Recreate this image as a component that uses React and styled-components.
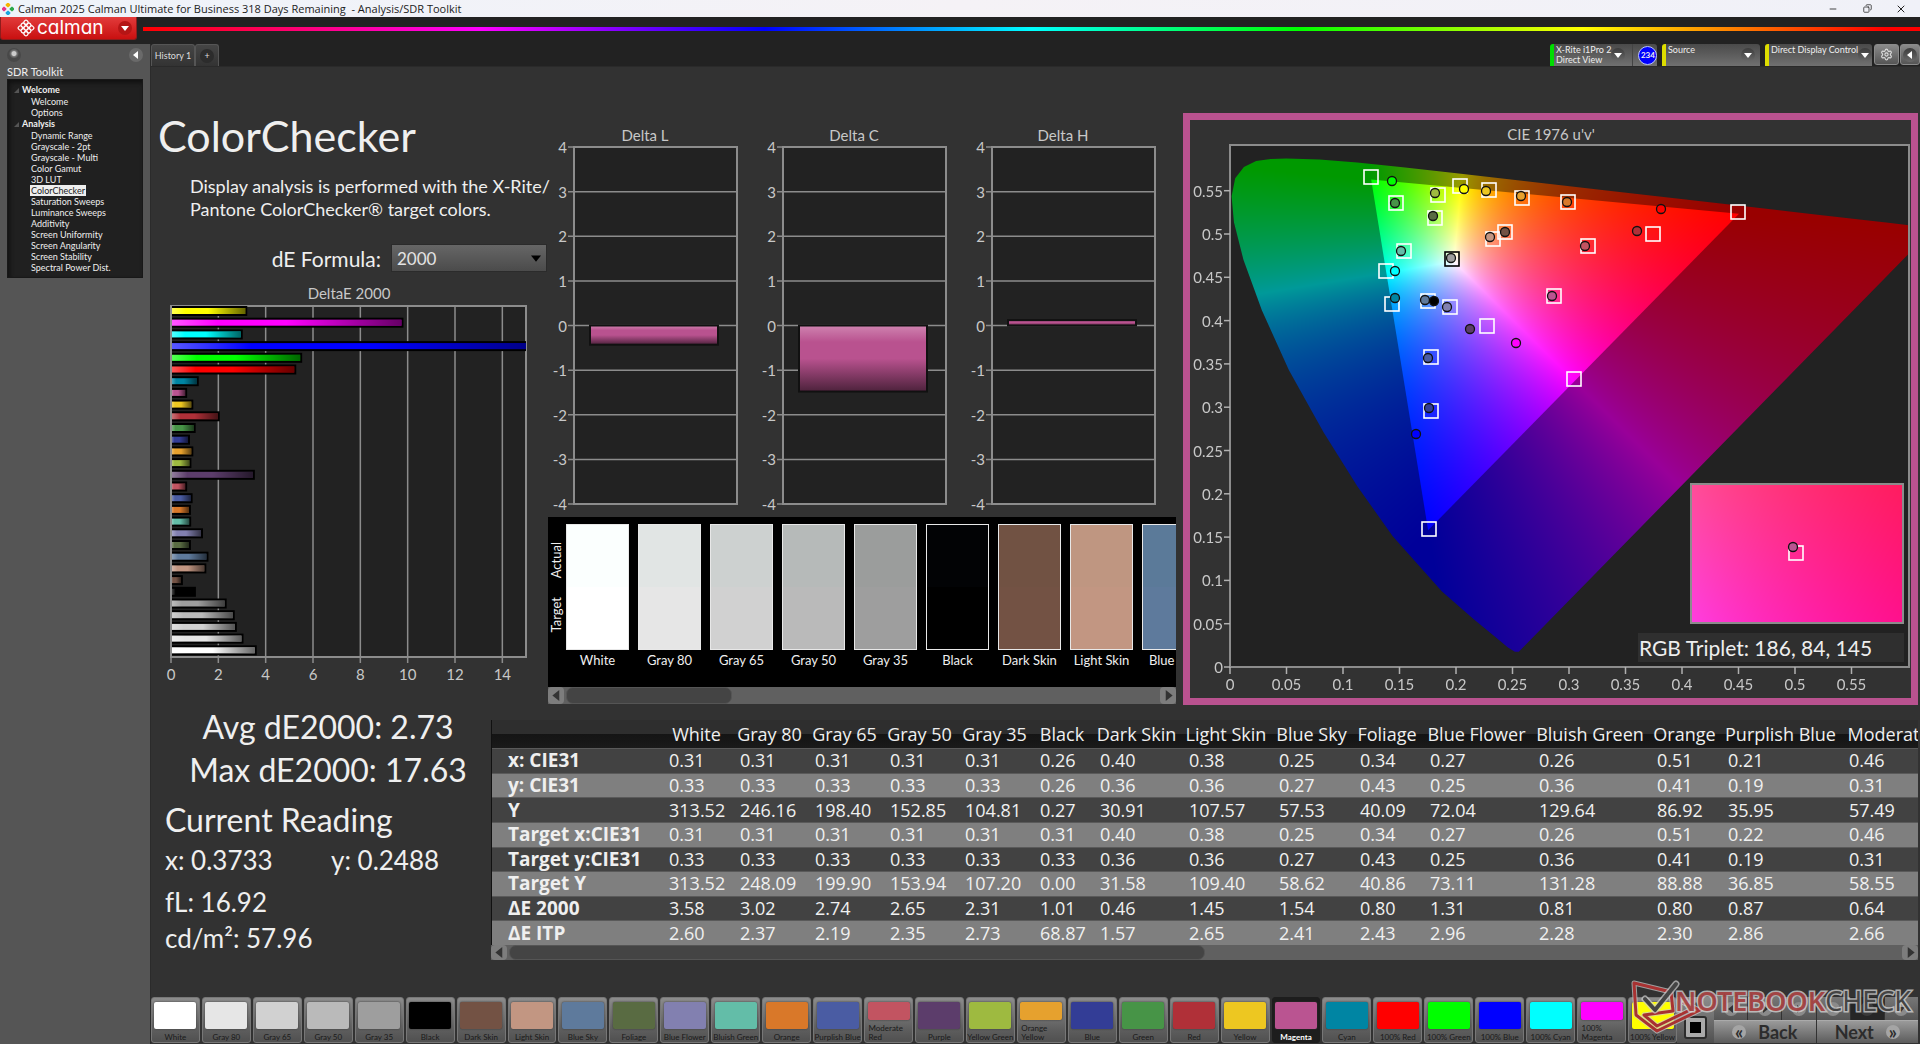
import React, { useEffect, useRef } from "react";
import styled, { createGlobalStyle, css } from "styled-components";
import { Minus, Copy, X, Settings } from "lucide-react";

const GlobalStyle = createGlobalStyle`
  * {
    box-sizing: border-box;
  }

  body {
    margin: 0;
    background: #323232;
    color: #efefef;
    font-family: Lato, "Noto Sans", sans-serif;
  }

  button, select {
    font-family: inherit;
    color: inherit;
    border: 0;
    padding: 0;
    margin: 0;
  }

  a {
    color: inherit;
    text-decoration: none;
  }
`;

/* ---------- data ---------- */

const patches = [
  { name: "White", color: "#ffffff", actual: "#fbfffe", de: 3.58 },
  { name: "Gray 80", color: "#e6e6e6", actual: "#e1e5e4", de: 3.02 },
  { name: "Gray 65", color: "#d1d1d1", actual: "#cdd1d0", de: 2.74 },
  { name: "Gray 50", color: "#bababa", actual: "#b6bab9", de: 2.65 },
  { name: "Gray 35", color: "#9e9e9e", actual: "#9b9d9c", de: 2.31 },
  { name: "Black", color: "#000000", actual: "#020305", de: 1.01 },
  { name: "Dark Skin", color: "#735244", actual: "#715243", de: 0.46 },
  { name: "Light Skin", color: "#c29682", actual: "#bf9681", de: 1.45 },
  { name: "Blue Sky", color: "#5e7a9c", actual: "#5b7a99", de: 1.54 },
  { name: "Foliage", color: "#596b42", de: 0.8 },
  { name: "Blue Flower", color: "#8280b0", de: 1.31 },
  { name: "Bluish Green", color: "#63bda8", de: 0.81 },
  { name: "Orange", color: "#d97829", de: 0.8 },
  { name: "Purplish Blue", color: "#4a5ca3", de: 0.87 },
  { name: "Moderate Red", color: "#c25461", de: 0.64, tall: true },
  { name: "Purple", color: "#5c3d6b", de: 3.5 },
  { name: "Yellow Green", color: "#9eba40", de: 0.82 },
  { name: "Orange Yellow", color: "#e6a12e", de: 0.9, tall: true },
  { name: "Blue", color: "#333d96", de: 0.76 },
  { name: "Green", color: "#479447", de: 1.0 },
  { name: "Red", color: "#b03038", de: 2.02 },
  { name: "Yellow", color: "#edc721", de: 0.9 },
  { name: "Magenta", color: "#ba5491", de: 0.64 },
  { name: "Cyan", color: "#0085a3", de: 1.13 },
  { name: "100% Red", color: "#ff0000", de: 5.25 },
  { name: "100% Green", color: "#00ff00", de: 5.5 },
  { name: "100% Blue", color: "#0000ff", de: 17.63 },
  { name: "100% Cyan", color: "#00ffff", de: 2.99 },
  { name: "100% Magenta", color: "#ff00ff", de: 9.78, tall: true },
  { name: "100% Yellow", color: "#ffff00", de: 3.18 },
];

const columns = [
  { name: "White", width: 71, values: ["0.31", "0.33", "313.52", "0.31", "0.33", "313.52", "3.58", "2.60"] },
  { name: "Gray 80", width: 75, values: ["0.31", "0.33", "246.16", "0.31", "0.33", "248.09", "3.02", "2.37"] },
  { name: "Gray 65", width: 75, values: ["0.31", "0.33", "198.40", "0.31", "0.33", "199.90", "2.74", "2.19"] },
  { name: "Gray 50", width: 75, values: ["0.31", "0.33", "152.85", "0.31", "0.33", "153.94", "2.65", "2.35"] },
  { name: "Gray 35", width: 75, values: ["0.31", "0.33", "104.81", "0.31", "0.33", "107.20", "2.31", "2.73"] },
  { name: "Black", width: 60, values: ["0.26", "0.26", "0.27", "0.31", "0.33", "0.00", "1.01", "68.87"] },
  { name: "Dark Skin", width: 89, values: ["0.40", "0.36", "30.91", "0.40", "0.36", "31.58", "0.46", "1.57"] },
  { name: "Light Skin", width: 90, values: ["0.38", "0.36", "107.57", "0.38", "0.36", "109.40", "1.45", "2.65"] },
  { name: "Blue Sky", width: 81, values: ["0.25", "0.27", "57.53", "0.25", "0.27", "58.62", "1.54", "2.41"] },
  { name: "Foliage", width: 70, values: ["0.34", "0.43", "40.09", "0.34", "0.43", "40.86", "0.80", "2.43"] },
  { name: "Blue Flower", width: 109, values: ["0.27", "0.25", "72.04", "0.27", "0.25", "73.11", "1.31", "2.96"] },
  { name: "Bluish Green", width: 118, values: ["0.26", "0.36", "129.64", "0.26", "0.36", "131.28", "0.81", "2.28"] },
  { name: "Orange", width: 71, values: ["0.51", "0.41", "86.92", "0.51", "0.41", "88.88", "0.80", "2.30"] },
  { name: "Purplish Blue", width: 121, values: ["0.21", "0.19", "35.95", "0.22", "0.19", "36.85", "0.87", "2.86"] },
  { name: "Moderate Red", width: 132, values: ["0.46", "0.31", "57.49", "0.46", "0.31", "58.55", "0.64", "2.66"] },
];

const rowNames = [
  "x: CIE31",
  "y: CIE31",
  "Y",
  "Target x:CIE31",
  "Target y:CIE31",
  "Target Y",
  "ΔE 2000",
  "ΔE ITP",
];

const tree = [
  { title: "Welcome", items: ["Welcome", "Options"] },
  {
    title: "Analysis",
    items: [
      "Dynamic Range",
      "Grayscale - 2pt",
      "Grayscale - Multi",
      "Color Gamut",
      "3D LUT",
      "ColorChecker",
      "Saturation Sweeps",
      "Luminance Sweeps",
      "Additivity",
      "Screen Uniformity",
      "Screen Angularity",
      "Screen Stability",
      "Spectral Power Dist.",
    ],
  },
];

// spectral locus in u'v', 400nm to 700nm
const locus = [
  [0.2557, 0.0175], [0.2522, 0.0175], [0.2461, 0.0226], [0.2347, 0.035],
  [0.2161, 0.0549], [0.1877, 0.0871], [0.1441, 0.151], [0.113, 0.208],
  [0.0828, 0.2708], [0.0521, 0.3427], [0.0282, 0.4117], [0.0119, 0.4698],
  [0.0035, 0.5131], [0.0014, 0.5432], [0.0046, 0.5638], [0.0123, 0.577],
  [0.0231, 0.5837], [0.036, 0.5861], [0.0501, 0.5868], [0.0792, 0.5856],
  [0.1127, 0.5821], [0.1531, 0.5766], [0.2026, 0.5694], [0.2623, 0.5604],
  [0.3315, 0.5501], [0.4035, 0.5393], [0.4692, 0.5296], [0.5202, 0.5219],
  [0.583, 0.5125], [0.6234, 0.5065],
];

const gamut = [[0.4507, 0.5229], [0.125, 0.5625], [0.1754, 0.1579]];

const targets = [
  [141, 32], [166, 58], [208, 50], [230, 41], [259, 45], [292, 53], [205, 73],
  [275, 87], [263, 94], [174, 106], [156, 126], [162, 159], [198, 156],
  [220, 162], [257, 181], [201, 212], [338, 57], [358, 101], [423, 89],
  [508, 67], [344, 234], [324, 151], [201, 266], [199, 384],
];

const readings = [
  [162, 36, "#00ff00"], [165, 58, "#479447"], [205, 48, "#9eba40"],
  [234, 44, "#ffff00"], [256, 46, "#edc721"], [291, 51, "#e6a12e"],
  [203, 71, "#596b42"], [275, 87, "#735244"], [260, 92, "#c29682"],
  [171, 106, "#63bda8"], [165, 126, "#00ffff"], [165, 153, "#0085a3"],
  [195, 155, "#5e7a9c"], [204, 156, "#000000"], [217, 162, "#8280b0"],
  [240, 184, "#5c3d6b"], [286, 198, "#ff00ff"], [198, 213, "#4a5ca3"],
  [221, 113, "#9e9e9e"], [199, 263, "#333d96"], [337, 57, "#d97829"],
  [431, 64, "#ff0000"], [407, 86, "#b03038"], [355, 101, "#c25461"],
  [322, 151, "#ba5491"], [186, 289, "#0000ff"],
];

/* ---------- window frame ---------- */

const Window = styled.div`
  display: flex;
  flex-direction: column;
  min-height: 100vh;
  position: relative;
  overflow: hidden;
  background: #222;
`;

const TitleBar = styled.header`
  display: flex;
  align-items: center;
  gap: 4px;
  height: 17px;
  padding: 0 11px 0 2px;
  background: linear-gradient(90deg, #eef3fa, #f5f2f6 50%, #f0f1f8);
  color: #1c1c1c;
  font-family: "Open Sans", sans-serif;
  font-size: 11px;
  white-space: pre;
`;

const WindowControls = styled.div`
  display: flex;
  gap: 18px;
  margin-left: auto;
`;

const WindowButton = styled.button`
  display: flex;
  align-items: center;
  justify-content: center;
  width: 16px;
  background: none;
  color: #222;
`;

const BrandRow = styled.div`
  display: flex;
  gap: 6px;
  height: 27px;
`;

const BrandButton = styled.button`
  display: flex;
  align-items: center;
  width: 137px;
  height: 23px;
  padding: 0 4px 0 16px;
  gap: 2px;
  background: linear-gradient(#e23b3b, #c91010);
  border: 1px solid #8f1c1c;
  border-top: 0;
  border-radius: 0 0 3px 3px;
  color: #fff;
`;

const BrandName = styled.span`
  flex: 1;
  text-align: left;
  font-family: Inter, sans-serif;
  font-feature-settings: "cv11";
  font-size: 19px;
  line-height: 20px;
`;

const Rainbow = styled.div`
  flex: 1;
  height: 4px;
  margin-top: 10px;
  background: linear-gradient(
    90deg,
    #f00,
    #f0f 19%,
    #00f 35%,
    #0ff 50%,
    #0f0 65%,
    #ff0 81%,
    #f00 98%
  );
`;

const Round = styled.span`
  display: inline-flex;
  align-items: center;
  justify-content: center;
  flex: none;
  width: 14px;
  height: 14px;
  border-radius: 50%;
  background: ${(p) => p.$bg || "linear-gradient(#3c3c3c, #6a6a6a)"};
`;

const Body = styled.div`
  display: flex;
  flex: 1;
`;

/* ---------- sidebar ---------- */

const Sidebar = styled.aside`
  width: 151px;
  padding: 4px 7px 0;
  background: #555;
  border-right: 1px solid #2b2b2b;
`;

const SidebarTop = styled.div`
  display: flex;
  justify-content: space-between;
  height: 17px;
`;

const SidebarButton = styled.button`
  display: flex;
  background: none;
`;

const SidebarTitle = styled.div`
  height: 14px;
  font-size: 11px;
  line-height: 13px;
  color: #eee;
`;

const Tree = styled.nav`
  width: 136px;
  padding: 4px 0 4px 6px;
  background: #202020;
  border: 1px solid #181818;
  box-shadow: inset 2px 3px 4px #111;
`;

const TreeTitle = styled.div`
  display: flex;
  align-items: center;
  gap: 3px;
  height: 12px;
  font-size: 9px;
  font-weight: 700;
  line-height: 12px;
`;

const TreeItem = styled.a`
  display: block;
  width: max-content;
  height: 11px;
  margin-left: 16px;
  padding: 0 1px;
  font-size: 9px;
  line-height: 11px;
  color: ${(p) => (p.$active ? "#222" : "#eee")};
  background: ${(p) => (p.$active ? "#eee" : "none")};
`;

/* ---------- tab bar ---------- */

const Content = styled.main`
  display: flex;
  flex-direction: column;
  flex: 1;
  min-width: 0;
`;

const TabBar = styled.div`
  display: flex;
  height: 22px;
`;

const Tab = styled.button`
  display: flex;
  align-items: center;
  justify-content: center;
  width: ${(p) => p.$width}px;
  border: 1px solid #555;
  border-bottom: 0;
  border-radius: 3px 3px 0 0;
  background: linear-gradient(#454545, #333);
  font-size: 9px;
  color: #ddd;
`;

const Devices = styled.div`
  display: flex;
  gap: 5px;
  margin-left: auto;
`;

const Device = styled.div`
  display: flex;
  justify-content: space-between;
  width: ${(p) => p.$width}px;
  padding: 0 ${(p) => p.$end}px 0 2px;
  border-left: 4px solid ${(p) => p.$strip};
  border-radius: 3px 3px 0 0;
  background: linear-gradient(#4a4a4a, #707070);
  font-size: 9px;
  line-height: 10px;
  color: #eee;
  white-space: nowrap;
`;

const DeviceName = styled.div`
  padding-top: 1px;
`;

const DeviceEnd = styled.div`
  display: flex;
  align-items: center;
  gap: 7px;
`;

const MeterBox = styled.div`
  display: flex;
  align-items: center;
  align-self: stretch;
  padding-left: 5px;
  border-left: 1px solid #444;
`;

const Meter = styled.span`
  width: 19px;
  height: 19px;
  border: 1px solid #b9c4ff;
  border-radius: 50%;
  background: #00f;
  font-size: 8px;
  font-weight: 700;
  line-height: 17px;
  text-align: center;
`;

const ToolButtons = styled.div`
  display: flex;
  gap: 1px;
  margin-left: -3px;
`;

const ToolButton = styled.button`
  display: flex;
  align-items: center;
  justify-content: center;
  width: ${(p) => p.$width}px;
  height: 21px;
  border: 1px solid #8a8a8a;
  border-radius: 3px;
  background: linear-gradient(#8a8a8a, #555);
`;

/* ---------- page ---------- */

const Page = styled.div`
  flex: 1;
  display: flex;
  flex-direction: column;
  background: #323232;
  border-top: 1px solid #2a2a2a;
`;

const Upper = styled.section`
  display: grid;
  grid-template-columns: 397px minmax(0, 635fr) minmax(0, 735fr);
  padding: 46px 2px 0 0;
`;

const Summary = styled.div`
  display: flex;
  flex-direction: column;
`;

const PageTitle = styled.h1`
  margin: 0;
  padding-left: 7px;
  font-size: 43px;
  font-weight: 400;
  line-height: 46px;
`;

const Description = styled.p`
  margin: 16px 0 0 39px;
  font-size: 18px;
  line-height: 23px;
  white-space: nowrap;
`;

const Formula = styled.div`
  display: flex;
  align-items: center;
  justify-content: flex-end;
  gap: 10px;
  height: 28px;
  margin: 23px 1px 12px 0;
`;

const FormulaLabel = styled.label`
  font-size: 21px;
`;

const SelectBox = styled.div`
  display: grid;
  align-items: center;
  width: 156px;
  background: linear-gradient(#666, #4b4b4b);
  border: 1px solid #2b2b2b;

  & > * {
    grid-area: 1 / 1;
  }

  & > svg {
    justify-self: end;
    margin-right: 5px;
    pointer-events: none;
  }
`;

const FormulaSelect = styled.select`
  appearance: none;
  width: 100%;
  height: 26px;
  padding-left: 5px;
  background: none;
  font-size: 17px;
  color: #e4e4e4;
`;

const Chart = styled.svg`
  display: block;
  width: 100%;
  height: auto;

  text {
    font-family: Lato, sans-serif;
    font-size: 15px;
    fill: #c8c8c8;
  }
`;

const Middle = styled.div`
  display: flex;
  flex-direction: column;
  padding-top: 12px;
`;

const DeltaRow = styled.div`
  display: grid;
  grid-template-columns: repeat(3, minmax(0, 1fr));
  margin-right: 8px;
`;

const SwatchPanel = styled.div`
  display: flex;
  height: 170px;
  margin-right: 7px;
  padding: 7px 0 0 2px;
  gap: 3px;
  background: #000;
  overflow: hidden;
`;

const Sides = styled.div`
  display: flex;
  flex-direction: column;
  justify-content: space-evenly;
  flex: none;
  width: 13px;
  height: 126px;
`;

const Side = styled.span`
  writing-mode: vertical-rl;
  transform: rotate(180deg);
  font-size: 13px;
  line-height: 13px;
`;

const Swatches = styled.div`
  display: flex;
  gap: 9px;
`;

const Swatch = styled.figure`
  flex: none;
  width: 63px;
  margin: 0;
  text-align: center;
  font-size: 13px;
  line-height: 21px;
  white-space: nowrap;
`;

const SwatchColor = styled.div`
  height: 126px;
  border: 1px solid #e8e8e8;
  background: linear-gradient(
    ${(p) => p.$actual} 50%,
    ${(p) => p.$target} 50%
  );
`;

const ScrollBar = styled.div`
  display: flex;
  align-items: center;
  gap: 2px;
  height: ${(p) => p.$height}px;
  margin-right: ${(p) => p.$inset || 0}px;
  background: #606060;
`;

const ScrollButton = styled.button`
  display: flex;
  align-items: center;
  justify-content: center;
  flex: none;
  width: 16px;
  height: 100%;
  border-radius: 4px;
  background: #7d7d7d;
`;

const ScrollTrack = styled.div`
  flex: 1;
  height: 100%;
`;

const ScrollThumb = styled.div`
  width: ${(p) => p.$size};
  height: 100%;
  border: 1px solid #555;
  border-radius: 7px;
  background: #444;
`;

const CiePanel = styled.div`
  align-self: start;
  border: 7px solid #b9528f;
  background: #323232;

  canvas {
    display: block;
    width: 100%;
    height: 100%;
  }
`;

/* ---------- readings and table ---------- */

const Lower = styled.section`
  display: flex;
  padding-right: 2px;
`;

const Stats = styled.div`
  flex: none;
  width: 340px;
  padding-left: 14px;
`;

const Overall = styled.div`
  width: 326px;
  text-align: center;
  font-size: 32px;
  line-height: 43px;
`;

const StatsTitle = styled.h2`
  margin: 9px 0 0;
  font-size: 32px;
  font-weight: 400;
  line-height: 40px;
`;

const Reading = styled.div`
  display: grid;
  grid-template-columns: 166px 1fr;
  font-size: 26px;
  line-height: ${(p) => p.$line}px;
`;

const TablePanel = styled.div`
  flex: 1;
  min-width: 0;
  margin-top: 15px;
`;

const TableClip = styled.div`
  overflow: hidden;
  border-left: 1px solid #111;
`;

const Table = styled.table`
  table-layout: fixed;
  width: 1458px;
  height: 225px;
  border-collapse: separate;
  border-spacing: 0;
  font-family: "Open Sans", sans-serif;
  font-size: 18px;
  line-height: 22px;
  white-space: nowrap;
`;

const HeadCell = styled.th`
  height: 28px;
  padding: 0;
  font-size: 18px;
  font-weight: 400;
`;

const HeadRow = styled.tr`
  background: linear-gradient(#2e2e2e 50%, #141414 50%, #1a1a1a);
`;

const DataRow = styled.tr`
  background: #424242;
  box-shadow: inset 0 1px #5a5a5a;

  &:nth-child(even) {
    background: #7f7f7f;
  }
`;

const RowHead = styled.th`
  padding: 0 0 0 16px;
  text-align: left;
  font-size: 19px;
  font-weight: 700;
`;

const Cell = styled.td`
  padding: 0 0 0 8px;
  color: #f0f0f0;
`;

/* ---------- bottom strip ---------- */

const Strip = styled.footer`
  display: flex;
  height: 47px;
  margin-top: auto;
  padding: 0 2px 1px 0;
`;

const PatchList = styled.div`
  display: grid;
  grid-template-columns: repeat(30, minmax(0, 1fr));
  gap: 2px;
  flex: 1;
`;

const PatchButton = styled.button`
  display: flex;
  flex-direction: column;
  align-items: center;
  justify-content: space-between;
  min-width: 0;
  padding: 4px 0 0;
  border-radius: 3px;
  background: linear-gradient(#8c8c8c, #5c5c5c 75%, #505050);
  border: 1px solid #777;
  font-size: 8px;
  line-height: 9px;
  color: #1a1a1a;
  white-space: nowrap;

  ${(p) =>
    p.$active &&
    css`
      background: #1d1d1d;
      border-color: #1d1d1d;
      color: #fff;
      font-weight: 700;
    `}
`;

const PatchColor = styled.span`
  width: 42px;
  height: ${(p) => (p.$tall ? 18 : 27)}px;
  border-radius: 2px;
  background: ${(p) => p.$color};
  box-shadow: 0 0 2px #333;
`;

const PatchName = styled.span`
  width: ${(p) => (p.$tall ? "40px" : "auto")};
  white-space: ${(p) => (p.$tall ? "normal" : "nowrap")};
  text-align: left;
`;

const StopColumn = styled.div`
  display: flex;
  flex-direction: column;
  align-items: center;
  justify-content: space-between;
  flex: none;
  width: 37px;
  padding: 4px 0;
  background: linear-gradient(#8c8c8c, #505050);
`;

const StopButton = styled.button`
  width: 23px;
  height: 23px;
  border: 2px solid #2c2c2c;
  border-radius: 3px;
  background: #aaa;
  padding: 4px;
`;

const StopMark = styled.span`
  display: block;
  width: 11px;
  height: 11px;
  background: #000;
`;

const Transport = styled.div`
  display: grid;
  grid-template-rows: 23px 23px;
  flex: none;
  width: 204px;
`;

const IconRow = styled.div`
  display: grid;
  grid-template-columns: repeat(6, 1fr);
  gap: 1px;
`;

const IconButton = styled.button`
  display: flex;
  align-items: center;
  justify-content: center;
  background: ${(p) => (p.$dark ? "#262626" : "linear-gradient(#777, #555)")};
`;

const StepRow = styled.div`
  display: grid;
  grid-template-columns: 1fr 1fr;
  gap: 1px;
`;

const StepButton = styled.button`
  display: flex;
  align-items: center;
  justify-content: center;
  gap: 12px;
  background: linear-gradient(#9a9a9a, #5c5c5c);
  border-top: 1px solid #aaa;
  font-size: 18px;
  font-weight: 700;
  line-height: 18px;
  color: #2c2c2c;
`;

const Watermark = styled.div`
  position: absolute;
  right: 9px;
  bottom: 8px;
  display: flex;
  pointer-events: none;
`;

const WatermarkText = styled.span`
  margin: 9px 0 0 -29px;
  font-family: "Noto Sans", sans-serif;
  font-size: 27px;
  font-weight: 600;
  line-height: 26px;
  color: ${(p) => p.$color};
  -webkit-text-stroke: 3px rgba(215, 215, 215, 0.75);
  paint-order: stroke fill;
`;

const WatermarkTail = styled(WatermarkText)`
  margin-left: 0;
  font-weight: 400;
`;

/* ---------- drawings ---------- */

const Caret = ({ dir = "down", color = "#fff", size = 8 }) => {
  const shapes = {
    down: "0,2 8,2 4,7",
    up: "0,6 8,6 4,1",
    left: "6,0 6,8 1,4",
    right: "2,0 2,8 7,4",
  };
  return (
    <svg width={size} height={size} viewBox="0 0 8 8" aria-hidden="true">
      <polygon points={shapes[dir]} fill={color} />
    </svg>
  );
};

const AppIcon = () => (
  <svg width="12" height="12" viewBox="0 0 12 12" aria-hidden="true">
    <rect x="4" y="0" width="4" height="4" rx="1" transform="rotate(45 6 2)" fill="#f5b400" />
    <rect x="0" y="4" width="4" height="4" rx="1" transform="rotate(45 2 6)" fill="#e6358a" />
    <rect x="8" y="4" width="4" height="4" rx="1" transform="rotate(45 10 6)" fill="#2aa84a" />
    <rect x="4" y="8" width="4" height="4" rx="1" transform="rotate(45 6 10)" fill="#19a6e0" />
  </svg>
);

const BrandMark = () => (
  <svg width="18" height="20" viewBox="0 0 18 20" aria-hidden="true">
    <g transform="translate(9 10) rotate(45)">
      {[-4, 0, 4].map((y) =>
        [-4, 0, 4].map((x) => (
          <rect key={`${x}${y}`} x={x - 2} y={y - 2} width="4" height="4" rx="1.6" fill="none" stroke="#fff" strokeWidth="1.2" />
        ))
      )}
    </g>
  </svg>
);

// u'v' to linear rgb, brightest channel at full
const chromaColor = (u, v) => {
  const d = 6 * u - 16 * v + 12;
  const x = (9 * u) / d;
  const y = (4 * v) / d;
  const X = x / y;
  const Z = (1 - x - y) / y;
  const rgb = [
    3.2406 * X - 1.5372 - 0.4986 * Z,
    -0.9689 * X + 1.8758 + 0.0415 * Z,
    0.0557 * X - 0.204 + 1.057 * Z,
  ].map((c) => Math.max(0, c));
  const top = Math.max(...rgb);
  return rgb.map((c) => (c / top) * 255);
};

const Chroma = ({ width, height, range, outlined }) => {
  const ref = useRef(null);
  const [u0, u1, v0, v1] = range;

  useEffect(() => {
    const layer = (scale) => {
      const c = document.createElement("canvas");
      c.width = width;
      c.height = height;
      const g = c.getContext("2d");
      const img = g.createImageData(width, height);
      for (let j = 0; j < height; j++) {
        const v = Math.max(0.001, v1 - ((v1 - v0) * j) / height);
        for (let i = 0; i < width; i++) {
          const rgb = chromaColor(u0 + ((u1 - u0) * i) / width, v);
          const k = (j * width + i) * 4;
          img.data[k] = rgb[0] * scale;
          img.data[k + 1] = rgb[1] * scale;
          img.data[k + 2] = rgb[2] * scale;
          img.data[k + 3] = 255;
        }
      }
      g.putImageData(img, 0, 0);
      return c;
    };
    const ctx = ref.current.getContext("2d");
    ctx.clearRect(0, 0, width, height);
    if (!outlined) {
      ctx.drawImage(layer(1), 0, 0);
      return;
    }
    const clipped = (points, source) => {
      ctx.save();
      ctx.beginPath();
      points.forEach(([u, v]) =>
        ctx.lineTo(((u - u0) / (u1 - u0)) * width, ((v1 - v) / (v1 - v0)) * height)
      );
      ctx.closePath();
      ctx.clip();
      ctx.drawImage(source, 0, 0);
      ctx.restore();
    };
    clipped(locus, layer(0.6));
    clipped(gamut, layer(1));
  }, [width, height, u0, u1, v0, v1, outlined]);

  return <canvas ref={ref} width={width} height={height} />;
};

const DeltaEChart = () => {
  const unit = 355 / 15;
  const pitch = 351 / patches.length;
  const bars = [...patches].reverse();
  return (
    <Chart viewBox="0 0 397 402" role="img" aria-label="DeltaE 2000">
      <defs>
        <linearGradient id="barShade">
          <stop offset="0" stopColor="#fff" stopOpacity="0.35" />
          <stop offset="0.2" stopColor="#fff" stopOpacity="0" />
          <stop offset="0.5" stopColor="#000" stopOpacity="0" />
          <stop offset="1" stopColor="#000" stopOpacity="0.6" />
        </linearGradient>
        <clipPath id="barArea">
          <rect x="20" y="22" width="355" height="352" />
        </clipPath>
      </defs>
      <text x="198" y="15" textAnchor="middle">DeltaE 2000</text>
      <rect x="20" y="22" width="355" height="351" fill="#222" stroke="#8c8c8c" strokeWidth="2" />
      {[0, 2, 4, 6, 8, 10, 12, 14].map((n) => (
        <g key={n}>
          <line x1={20 + n * unit} x2={20 + n * unit} y1="22" y2="379" stroke="#8c8c8c" strokeWidth="1.5" />
          <text x={20 + n * unit} y="396" textAnchor="middle">{n}</text>
        </g>
      ))}
      <g clipPath="url(#barArea)">
        {bars.map((p, i) => (
          <g key={p.name}>
            <rect x="20" y={23 + i * pitch} width={p.de * unit} height="8" fill={p.color} stroke="#000" strokeWidth="2" />
            <rect x="20" y={24 + i * pitch} width={Math.min(p.de, 17) * unit - 1} height="6" fill="url(#barShade)" />
          </g>
        ))}
      </g>
      <line x1="20" x2="20" y1="22" y2="373" stroke="#8c8c8c" strokeWidth="2" />
    </Chart>
  );
};

const DeltaChart = ({ title, value }) => {
  const unit = 357 / 8;
  const zero = 22 + unit * 4;
  const top = value > 0 ? zero - value * unit : zero;
  const height = Math.abs(value) * unit;
  const id = `shade${title.slice(-1)}`;
  return (
    <Chart viewBox="0 0 209 392" role="img" aria-label={title}>
      <defs>
        <linearGradient id={id} x2="0" y2="1">
          <stop offset="0" stopColor="#cf83b0" />
          <stop offset="0.25" stopColor="#b9528f" />
          <stop offset="0.5" stopColor="#b9528f" />
          <stop offset="1" stopColor="#4d223c" />
        </linearGradient>
      </defs>
      <text x="97" y="16" textAnchor="middle">{title}</text>
      <rect x="26" y="22" width="163" height="357" fill="#222" />
      {[4, 3, 2, 1, 0, -1, -2, -3, -4].map((n) => (
        <g key={n}>
          <line x1="20" x2="189" y1={zero - n * unit} y2={zero - n * unit} stroke="#8c8c8c" strokeWidth="1.5" />
          <text x="19" y={zero - n * unit + 6} textAnchor="end">{n}</text>
        </g>
      ))}
      <rect x="26" y="22" width="163" height="357" fill="none" stroke="#8c8c8c" strokeWidth="2" />
      <rect x="42" y={top} width="128" height={height} fill={`url(#${id})`} stroke="#111" strokeWidth="2" />
    </Chart>
  );
};

const Target = ({ x, y, color = "#fff" }) => (
  <rect x={x - 7} y={y - 7} width="14" height="14" fill="none" stroke={color} strokeWidth="1.6" />
);

const Dot = ({ x, y, color }) => (
  <circle cx={x} cy={y} r="4.5" fill={color} stroke="#111" strokeWidth="1.3" />
);

const CieChart = () => (
  <Chart viewBox="0 0 721 578" role="img" aria-label="CIE 1976 u'v'">
    <text x="361" y="20" textAnchor="middle">CIE 1976 u'v'</text>
    <rect x="40" y="25" width="679" height="522" fill="#222" />
    <foreignObject x="40" y="25" width="679" height="522">
      <Chroma width={679} height={522} range={[0, 0.6012, 0, 0.6023]} outlined />
    </foreignObject>
    <rect x="40" y="25" width="679" height="522" fill="none" stroke="#8c8c8c" strokeWidth="2" />
    {Array.from({ length: 12 }, (_, i) => {
      const label = String(i / 20);
      const x = 40 + i * 56.5;
      const y = 547 - i * 43.3;
      return (
        <g key={i}>
          <line x1={x} x2={x} y1="547" y2="554" stroke="#b0b0b0" strokeWidth="1.5" />
          <line x1="34" x2="40" y1={y} y2={y} stroke="#b0b0b0" strokeWidth="1.5" />
          <text x={x} y="570" textAnchor="middle">{label}</text>
          <text x="33" y={y + 6} textAnchor="end">{label}</text>
        </g>
      );
    })}
    <g transform="translate(40 25)">
      {targets.map(([x, y]) => (
        <Target key={`${x}-${y}`} x={x} y={y} />
      ))}
      {readings.map(([x, y, color]) => (
        <Dot key={`${x}-${y}`} x={x} y={y} color={color} />
      ))}
      <Target x={222} y={114} color="#000" />
    </g>
    <foreignObject x="501" y="364" width="212" height="139">
      <Chroma width={212} height={139} range={[0.262, 0.322, 0.402, 0.444]} />
    </foreignObject>
    <rect x="501" y="364" width="212" height="139" fill="none" stroke="#8c8c8c" strokeWidth="2" />
    <Target x={606} y={433} />
    <Dot x={603} y={427} color="#ba5491" />
    <rect x="448" y="513" width="266" height="29" fill="#2f2f2f" />
    <text x="449" y="536" style={{ fontSize: 21, fill: "#eee" }}>RGB Triplet: 186, 84, 145</text>
  </Chart>
);

const WatermarkLogo = () => (
  <svg width="74" height="57" viewBox="0 0 74 57" aria-hidden="true">
    <g fill="none" strokeLinejoin="round" strokeLinecap="round">
      <path d="M4 4 L6 36 L27 52 L70 31 L54 24 M4 4 L41 13 L43 32 L14 36 M14 36 L27 47 L60 31" stroke="#ccc" strokeOpacity="0.7" strokeWidth="5" />
      <path d="M4 4 L6 36 L27 52 L70 31 L54 24 M4 4 L41 13 L43 32 L14 36 M14 36 L27 47 L60 31" stroke="#a83232" strokeWidth="3" />
      <path d="M15 20 L25 31 L46 5" stroke="#ccc" strokeOpacity="0.7" strokeWidth="7" />
      <path d="M15 20 L25 31 L46 5" stroke="#444" strokeWidth="4" />
    </g>
  </svg>
);

const ScrollArea = ({ label, height, inset, thumb }) => (
  <ScrollBar $height={height} $inset={inset}>
    <ScrollButton aria-label={`Scroll ${label} left`}>
      <Caret dir="left" color="#333" size={11} />
    </ScrollButton>
    <ScrollTrack>
      <ScrollThumb $size={thumb} />
    </ScrollTrack>
    <ScrollButton aria-label={`Scroll ${label} right`}>
      <Caret dir="right" color="#333" size={11} />
    </ScrollButton>
  </ScrollBar>
);

/* ---------- sections ---------- */

const SideNav = () => (
  <Sidebar>
    <SidebarTop>
      <SidebarButton aria-label="Pin">
        <Round $bg="radial-gradient(circle at 50% 40%, #ccc 0 2px, #777 3px, #484848 5px)" />
      </SidebarButton>
      <SidebarButton aria-label="Collapse">
        <Round $bg="#6a6a6a">
          <Caret dir="left" />
        </Round>
      </SidebarButton>
    </SidebarTop>
    <SidebarTitle>SDR Toolkit</SidebarTitle>
    <Tree>
      {tree.map((group) => (
        <React.Fragment key={group.title}>
          <TreeTitle>
            <svg width="5" height="5" viewBox="0 0 5 5" aria-hidden="true">
              <polygon points="5,0 5,5 0,5" fill="#555" />
            </svg>
            {group.title}
          </TreeTitle>
          {group.items.map((item) => (
            <TreeItem key={item} href="#" $active={item === "ColorChecker"}>
              {item}
            </TreeItem>
          ))}
        </React.Fragment>
      ))}
    </Tree>
  </Sidebar>
);

const TopTabs = () => (
  <TabBar>
    <Tab $width={44}>History 1</Tab>
    <Tab $width={24} aria-label="Add history">
      <Round $bg="#2c2c2c">+</Round>
    </Tab>
    <Devices>
      <Device $width={107} $strip="#0d0" $end={2}>
        <DeviceName>
          X-Rite i1Pro 2<br />
          Direct View
        </DeviceName>
        <DeviceEnd>
          <Round><Caret /></Round>
          <MeterBox>
            <Meter>234</Meter>
          </MeterBox>
        </DeviceEnd>
      </Device>
      <Device $width={98} $strip="#dd0" $end={5}>
        <DeviceName>Source</DeviceName>
        <DeviceEnd><Round><Caret /></Round></DeviceEnd>
      </Device>
      <Device $width={107} $strip="#dd0" $end={1}>
        <DeviceName>Direct Display Control</DeviceName>
        <DeviceEnd><Round><Caret /></Round></DeviceEnd>
      </Device>
      <ToolButtons>
        <ToolButton $width={25} aria-label="Settings">
          <Settings size={13} color="#ddd" />
        </ToolButton>
        <ToolButton $width={20} aria-label="Collapse panel">
          <Round><Caret dir="left" /></Round>
        </ToolButton>
      </ToolButtons>
    </Devices>
  </TabBar>
);

const ResultTable = () => (
  <TablePanel>
    <TableClip>
      <Table>
        <colgroup>
          <col style={{ width: 169 }} />
          {columns.map((c) => (
            <col key={c.name} style={{ width: c.width }} />
          ))}
        </colgroup>
        <thead>
          <HeadRow>
            <HeadCell />
            {columns.map((c) => (
              <HeadCell key={c.name} scope="col">{c.name}</HeadCell>
            ))}
          </HeadRow>
        </thead>
        <tbody>
          {rowNames.map((name, i) => (
            <DataRow key={name}>
              <RowHead scope="row">{name}</RowHead>
              {columns.map((c) => (
                <Cell key={c.name}>{c.values[i]}</Cell>
              ))}
            </DataRow>
          ))}
        </tbody>
      </Table>
    </TableClip>
    <ScrollArea label="table" height={15} thumb="50%" />
  </TablePanel>
);

const BottomStrip = () => (
  <Strip>
    <PatchList>
      {patches.map((p) => (
        <PatchButton key={p.name} $active={p.name === "Magenta"}>
          <PatchColor $color={p.color} $tall={p.tall} />
          <PatchName $tall={p.tall}>{p.name}</PatchName>
        </PatchButton>
      ))}
    </PatchList>
    <StopColumn>
      <Caret dir="up" color="#333" />
      <StopButton aria-label="Stop">
        <StopMark />
      </StopButton>
    </StopColumn>
    <Transport>
      <IconRow>
        {["left", "right", "right", "down", "up", "down"].map((dir, i) => (
          <IconButton key={i} $dark={i === 4} aria-label={`Read ${i + 1}`}>
            <Round $bg={i === 4 ? "#3a3a3a" : "#8a8a8a"}>
              <Caret dir={dir} color="#333" />
            </Round>
          </IconButton>
        ))}
      </IconRow>
      <StepRow>
        <StepButton>
          <Round $bg="#a5a5a5">«</Round>
          Back
        </StepButton>
        <StepButton>
          Next
          <Round $bg="#a5a5a5">»</Round>
        </StepButton>
      </StepRow>
    </Transport>
  </Strip>
);

const App = () => {
  return (
    <Window>
      <GlobalStyle />
      <TitleBar>
        <AppIcon />
        <span>Calman 2025 Calman Ultimate for Business 318 Days Remaining  - Analysis/SDR Toolkit</span>
        <WindowControls>
          <WindowButton aria-label="Minimize"><Minus size={10} /></WindowButton>
          <WindowButton aria-label="Restore"><Copy size={9} transform="scale(-1 1)" /></WindowButton>
          <WindowButton aria-label="Close"><X size={12} /></WindowButton>
        </WindowControls>
      </TitleBar>
      <BrandRow>
        <BrandButton>
          <BrandMark />
          <BrandName>calman</BrandName>
          <Round $bg="#b51515"><Caret /></Round>
        </BrandButton>
        <Rainbow />
      </BrandRow>
      <Body>
        <SideNav />
        <Content>
          <TopTabs />
          <Page>
            <Upper>
              <Summary>
                <PageTitle>ColorChecker</PageTitle>
                <Description>
                  Display analysis is performed with the X-Rite/
                  <br />
                  Pantone ColorChecker® target colors.
                </Description>
                <Formula>
                  <FormulaLabel htmlFor="formula">dE Formula:</FormulaLabel>
                  <SelectBox>
                    <FormulaSelect id="formula" defaultValue="2000">
                      <option>2000</option>
                    </FormulaSelect>
                    <Caret color="#000" size={10} />
                  </SelectBox>
                </Formula>
                <DeltaEChart />
              </Summary>
              <Middle>
                <DeltaRow>
                  <DeltaChart title="Delta L" value={-0.43} />
                  <DeltaChart title="Delta C" value={-1.48} />
                  <DeltaChart title="Delta H" value={0.12} />
                </DeltaRow>
                <SwatchPanel>
                  <Sides>
                    <Side>Actual</Side>
                    <Side>Target</Side>
                  </Sides>
                  <Swatches>
                    {patches.slice(0, 9).map((p) => (
                      <Swatch key={p.name}>
                        <SwatchColor $actual={p.actual} $target={p.color} />
                        <figcaption>{p.name}</figcaption>
                      </Swatch>
                    ))}
                  </Swatches>
                </SwatchPanel>
                <ScrollArea label="swatches" height={17} inset={7} thumb="28%" />
              </Middle>
              <CiePanel>
                <CieChart />
              </CiePanel>
            </Upper>
            <Lower>
              <Stats>
                <Overall>Avg dE2000: 2.73</Overall>
                <Overall>Max dE2000: 17.63</Overall>
                <StatsTitle>Current Reading</StatsTitle>
                <Reading $line={40}>
                  <span>x: 0.3733</span>
                  <span>y: 0.2488</span>
                </Reading>
                <Reading $line={44}>fL: 16.92</Reading>
                <Reading $line={28}>cd/m²: 57.96</Reading>
              </Stats>
              <ResultTable />
            </Lower>
            <BottomStrip />
          </Page>
        </Content>
      </Body>
      <Watermark>
        <WatermarkLogo />
        <WatermarkText $color="rgba(160, 50, 50, 0.85)">NOTEBOOK</WatermarkText>
        <WatermarkTail $color="#444">CHECK</WatermarkTail>
      </Watermark>
    </Window>
  );
};

export default App;
